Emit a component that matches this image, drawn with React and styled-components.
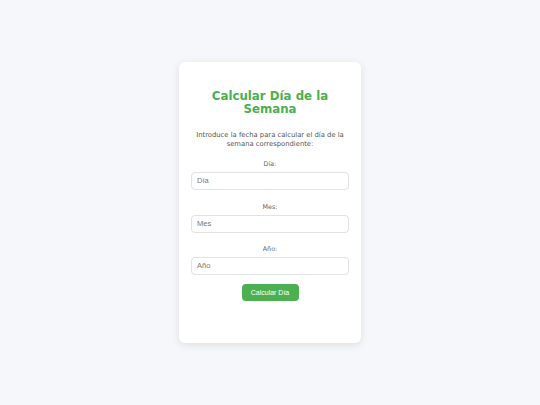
import React from "react";
import styled, { createGlobalStyle } from "styled-components";

const Global = createGlobalStyle`
  html, body { margin: 0; padding: 0; }
  body {
    background: #f5f7fa;
    font-family: "DejaVu Sans", Verdana, sans-serif;
  }
`;

const Page = styled.div`
  height: 405px;
  display: flex;
  align-items: center;
  justify-content: center;
`;

const Card = styled.div`
  width: 182px;
  height: 281px;
  box-sizing: border-box;
  background: #fff;
  border-radius: 6px;
  box-shadow: 0 2px 8px rgba(0, 0, 0, 0.1);
  padding: 28px 12px 0;
  display: flex;
  flex-direction: column;
  align-items: stretch;
  text-align: center;
`;

const Title = styled.h2`
  margin: 0;
  font-size: 11.8px;
  line-height: 13px;
  font-weight: bold;
  color: #4caf50;
`;

const Desc = styled.p`
  margin: 15px 0 0;
  font-size: 6.8px;
  line-height: 9.3px;
  color: #555;
`;

const Field = styled.div`
  display: flex;
  flex-direction: column;
  margin-top: ${(p) => p.$top}px;
`;

const Label = styled.label`
  font-size: 6.4px;
  line-height: 8px;
  color: #666;
  margin-bottom: 4px;
`;

const Input = styled.input`
  box-sizing: border-box;
  width: 100%;
  height: 18px;
  border: 1px solid #e2e2e2;
  border-radius: 4px;
  padding: 0 5px;
  font-family: "Liberation Sans", Arial, sans-serif;
  font-size: 7.5px;
  color: #333;
  outline: none;
  &::placeholder { color: #777; }
`;

const Button = styled.button`
  align-self: center;
  margin-top: 9px;
  width: 57px;
  height: 17px;
  border: none;
  border-radius: 4px;
  background: #4caf50;
  color: #fff;
  font-family: "Liberation Sans", Arial, sans-serif;
  font-size: 7px;
  padding: 0;
  cursor: pointer;
`;

const fields = [
  { label: "Día:", ph: "Día", top: 10 },
  { label: "Mes:", ph: "Mes", top: 13 },
  { label: "Año:", ph: "Año", top: 12 },
];

export default function App() {
  return (
    <>
      <Global />
      <Page>
        <Card>
          <Title>Calcular Día de la Semana</Title>
          <Desc>Introduce la fecha para calcular el día de la semana correspondiente:</Desc>
          {fields.map((f) => (
            <Field key={f.label} $top={f.top}>
              <Label>{f.label}</Label>
              <Input placeholder={f.ph} />
            </Field>
          ))}
          <Button>Calcular Día</Button>
        </Card>
      </Page>
    </>
  );
}
